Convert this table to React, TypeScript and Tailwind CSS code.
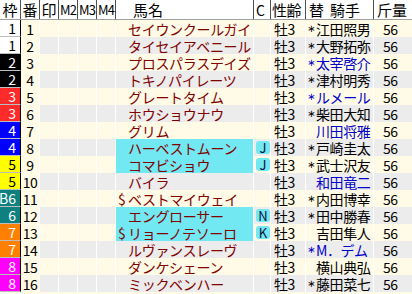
const WAKU: Record<string, string> = {
  "1": "bg-white text-black",
  "2": "bg-black text-white",
  "3": "bg-[#ff2b2b] text-white",
  "4": "bg-[#0000ff] text-white",
  "5": "bg-[#ffff00] text-black",
  "6": "bg-[#0f8080] text-white",
  "7": "bg-[#ff8000] text-white",
  "8": "bg-[#ff00ff] text-white",
};

type Horse = {
  waku: string;
  wakuLabel?: string;
  no: number;
  name: string;
  chikuten?: boolean;
  c?: string;
  jockey: string;
  star: boolean;
  blue: boolean;
};

const horses: Horse[] = [
  { waku: "1", no: 1, name: "セイウンクールガイ", jockey: "江田照男", star: true, blue: false },
  { waku: "1", no: 2, name: "タイセイアベニール", jockey: "大野拓弥", star: true, blue: false },
  { waku: "2", no: 3, name: "プロスパラスデイズ", jockey: "太宰啓介", star: true, blue: true },
  { waku: "2", no: 4, name: "トキノパイレーツ", jockey: "津村明秀", star: true, blue: false },
  { waku: "3", no: 5, name: "グレートタイム", jockey: "ルメール", star: true, blue: true },
  { waku: "3", no: 6, name: "ホウショウナウ", jockey: "柴田大知", star: true, blue: false },
  { waku: "4", no: 7, name: "グリム", jockey: "川田将雅", star: false, blue: true },
  { waku: "4", no: 8, name: "ハーベストムーン", c: "J", jockey: "戸崎圭太", star: true, blue: false },
  { waku: "5", no: 9, name: "コマビショウ", c: "J", jockey: "武士沢友", star: true, blue: false },
  { waku: "5", no: 10, name: "バイラ", jockey: "和田竜二", star: false, blue: true },
  { waku: "6", wakuLabel: "B6", no: 11, name: "ベストマイウェイ", chikuten: true, jockey: "内田博幸", star: true, blue: false },
  { waku: "6", no: 12, name: "エングローサー", c: "N", jockey: "田中勝春", star: true, blue: false },
  { waku: "7", no: 13, name: "リョーノテソーロ", chikuten: true, c: "K", jockey: "吉田隼人", star: false, blue: false },
  { waku: "7", no: 14, name: "ルヴァンスレーヴ", jockey: "M．デム", star: true, blue: true },
  { waku: "8", no: 15, name: "ダンケシェーン", jockey: "横山典弘", star: false, blue: false },
  { waku: "8", no: 16, name: "ミックベンハー", jockey: "藤田菜七", star: true, blue: false },
];

const head = "h-full border-r border-[#505050] flex items-center";

export default function App() {
  return (
    <div className="w-[412px] h-[294px] overflow-hidden bg-[#fffbe6] font-['Noto_Sans_CJK_JP',sans-serif] leading-none select-none">
      {/* header */}
      <div className="flex h-[20px] bg-white border-b border-[#a0a0a0] text-[15px] text-black">
        <div className={`${head} w-[21px] justify-center`}>枠</div>
        <div className={`${head} w-[19px] justify-center`}>番</div>
        <div className={`${head} w-[19px] justify-center`}>印</div>
        <div className={`${head} w-[19px] justify-center text-[13px] tracking-[-1px]`}>M2</div>
        <div className={`${head} w-[19px] justify-center text-[13px] tracking-[-1px]`}>M3</div>
        <div className={`${head} w-[19px] justify-center text-[13px] tracking-[-1px]`}>M4</div>
        <div className={`${head} w-[138px] pl-[17px]`}>馬名</div>
        <div className={`${head} w-[17px] pl-[2px] text-[14px]`}>C</div>
        <div className={`${head} w-[35px] pl-[1px] tracking-[-0.5px]`}>性齢</div>
        <div className={`${head} w-[68px] pl-[3px]`}>
          <span>替</span>
          <span className="ml-[6px]">騎手</span>
        </div>
        <div className="h-full w-[38px] flex items-center pl-[3px]">斤量</div>
      </div>

      {/* rows */}
      {horses.map((h, i) => {
        const stripe = i % 2 === 0 ? "bg-[#fffbe6]" : "bg-[#ececec]";
        const cell = `h-full border-r border-white flex items-center ${stripe}`;
        return (
          <div key={h.no} className="flex h-[17px] text-[14px]">
            <div
              className={`h-full w-[21px] flex items-center justify-end pr-[4px] border-r border-black border-b border-b-[#bdbdbd] text-[14px] ${WAKU[h.waku]}`}
            >
              {h.wakuLabel ?? h.waku}
            </div>
            <div className="h-full w-[19px] flex items-center justify-center border-r border-white bg-[#fffbe6] text-black tracking-[-0.5px]">
              {h.no}
            </div>
            <div className={`${cell} w-[19px]`} />
            <div className={`${cell} w-[19px]`} />
            <div className={`${cell} w-[19px]`} />
            <div className={`${cell} w-[19px]`} />
            <div
              className={`h-full w-[138px] border-r border-white flex items-center text-[#800000] ${
                h.c ? "bg-[#72e8f2]" : stripe
              }`}
            >
              <span className="w-[12px] pl-[2px] shrink-0">{h.chikuten ? "$" : ""}</span>
              <span className="tracking-[-0.3px] whitespace-nowrap">{h.name}</span>
            </div>
            <div className={`${cell} w-[17px] pl-[2px]`}>
              {h.c && (
                <span className="w-[15px] h-[13px] rounded-[3px] bg-[#72e8f2] text-[#101040] text-[13px] flex items-center justify-center">
                  {h.c}
                </span>
              )}
            </div>
            <div className={`${cell} w-[35px] pl-[3px] text-black tracking-[-0.5px]`}>牡3</div>
            <div
              className={`${cell} w-[68px] pl-[1px] whitespace-nowrap ${
                h.blue ? "text-[#0000c8]" : "text-black"
              }`}
            >
              <span className="w-[9px] shrink-0 text-[10px] font-['DejaVu_Sans',sans-serif]">{h.star ? "∗" : ""}</span>
              <span className="tracking-[-0.4px]">{h.jockey}</span>
            </div>
            <div className={`h-full w-[38px] flex items-center pl-[9px] text-black tracking-[-0.5px] ${stripe}`}>
              56
            </div>
          </div>
        );
      })}
    </div>
  );
}
